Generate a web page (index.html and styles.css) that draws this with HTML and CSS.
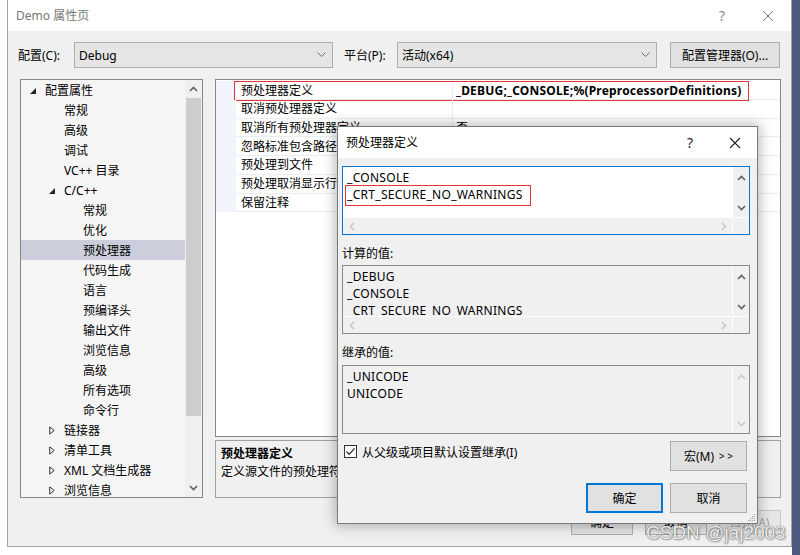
FILE: index.html
```html
<!DOCTYPE html>
<html lang="zh-CN">
<head>
<meta charset="utf-8">
<title>Demo 属性页</title>
<link rel="stylesheet" href="styles.css">
</head>
<body>
<div class="screen">
  <div class="dlg">
    <div class="titlebar">
      <span class="title">Demo 属性页</span>
      <span class="tb-btn help">?</span>
      <span class="tb-btn close"><svg width="12" height="12" viewBox="0 0 12 12"><path d="M1 1L11 11M11 1L1 11" stroke="#7a7a7a" stroke-width="1" fill="none"/></svg></span>
    </div>
    <div class="config-row">
      <span class="lbl lbl-cfg">配置(C):</span>
      <div class="combo combo-cfg"><span class="combo-text">Debug</span><svg class="chev" width="9" height="6" viewBox="0 0 9 6"><path d="M0.5 0.5L4.5 4.5L8.5 0.5" stroke="#6a6a6a" fill="none"/></svg></div>
      <span class="lbl lbl-plat">平台(P):</span>
      <div class="combo combo-plat"><span class="combo-text">活动(x64)</span><svg class="chev" width="9" height="6" viewBox="0 0 9 6"><path d="M0.5 0.5L4.5 4.5L8.5 0.5" stroke="#6a6a6a" fill="none"/></svg></div>
      <div class="btn btn-mgr">配置管理器(O)...</div>
    </div>
    <div class="content">
      <div class="tree">
        <div class="tree-list">
          <div class="item l0"><span class="tw"><svg width="6" height="6" viewBox="0 0 6 6"><path d="M6 0V6H0Z" fill="#262626"/></svg></span><span>配置属性</span></div>
          <div class="item l1"><span class="tw"></span><span>常规</span></div>
          <div class="item l1"><span class="tw"></span><span>高级</span></div>
          <div class="item l1"><span class="tw"></span><span>调试</span></div>
          <div class="item l1"><span class="tw"></span><span>VC++ 目录</span></div>
          <div class="item l1"><span class="tw"><svg width="6" height="6" viewBox="0 0 6 6"><path d="M6 0V6H0Z" fill="#262626"/></svg></span><span>C/C++</span></div>
          <div class="item l2"><span class="tw"></span><span>常规</span></div>
          <div class="item l2"><span class="tw"></span><span>优化</span></div>
          <div class="item l2 sel"><span class="tw"></span><span>预处理器</span></div>
          <div class="item l2"><span class="tw"></span><span>代码生成</span></div>
          <div class="item l2"><span class="tw"></span><span>语言</span></div>
          <div class="item l2"><span class="tw"></span><span>预编译头</span></div>
          <div class="item l2"><span class="tw"></span><span>输出文件</span></div>
          <div class="item l2"><span class="tw"></span><span>浏览信息</span></div>
          <div class="item l2"><span class="tw"></span><span>高级</span></div>
          <div class="item l2"><span class="tw"></span><span>所有选项</span></div>
          <div class="item l2"><span class="tw"></span><span>命令行</span></div>
          <div class="item l1"><span class="tw"><svg width="6" height="9" viewBox="0 0 6 9"><path d="M0.75 0.9V8.1L5.2 4.5Z" fill="none" stroke="#333" stroke-width="1"/></svg></span><span>链接器</span></div>
          <div class="item l1"><span class="tw"><svg width="6" height="9" viewBox="0 0 6 9"><path d="M0.75 0.9V8.1L5.2 4.5Z" fill="none" stroke="#333" stroke-width="1"/></svg></span><span>清单工具</span></div>
          <div class="item l1"><span class="tw"><svg width="6" height="9" viewBox="0 0 6 9"><path d="M0.75 0.9V8.1L5.2 4.5Z" fill="none" stroke="#333" stroke-width="1"/></svg></span><span>XML 文档生成器</span></div>
          <div class="item l1"><span class="tw"><svg width="6" height="9" viewBox="0 0 6 9"><path d="M0.75 0.9V8.1L5.2 4.5Z" fill="none" stroke="#333" stroke-width="1"/></svg></span><span>浏览信息</span></div>
        </div>
        <div class="vscroll tree-scroll">
          <div class="arrow up"><svg width="9" height="6" viewBox="0 0 9 6"><path d="M1 5L4.5 1.5L8 5" stroke="#606060" stroke-width="1.6" fill="none"/></svg></div>
          <div class="thumb"></div>
          <div class="track-fill"></div>
          <div class="arrow down"><svg width="9" height="6" viewBox="0 0 9 6"><path d="M1 1L4.5 4.5L8 1" stroke="#606060" stroke-width="1.6" fill="none"/></svg></div>
        </div>
      </div>
      <div class="right">
        <div class="grid">
          <div class="row first"><span class="gut"></span><span class="name">预处理器定义</span><span class="val bold">_DEBUG;_CONSOLE;%(PreprocessorDefinitions)</span><span class="mark mark-row"></span></div>
          <div class="row"><span class="gut"></span><span class="name">取消预处理器定义</span><span class="val"></span></div>
          <div class="row"><span class="gut"></span><span class="name">取消所有预处理器定义</span><span class="val">否</span></div>
          <div class="row"><span class="gut"></span><span class="name">忽略标准包含路径</span><span class="val">否</span></div>
          <div class="row"><span class="gut"></span><span class="name">预处理到文件</span><span class="val">否</span></div>
          <div class="row"><span class="gut"></span><span class="name">预处理取消显示行号</span><span class="val">否</span></div>
          <div class="row"><span class="gut"></span><span class="name">保留注释</span><span class="val">否</span></div>
        </div>
        <div class="desc">
          <div class="desc-title">预处理器定义</div>
          <div class="desc-text">定义源文件的预处理符号。</div>
        </div>
      </div>
    </div>
    <div class="bottom-btns">
      <div class="btn mbtn">确定</div>
      <div class="btn mbtn">取消</div>
      <div class="btn mbtn disabled">应用(A)</div>
    </div>
  </div>
  <div class="desktop"></div>
</div>

<div class="child">
  <div class="titlebar ctitle">
    <span class="title">预处理器定义</span>
    <span class="tb-btn chelp">?</span>
    <span class="tb-btn cclose"><svg width="12" height="12" viewBox="0 0 12 12"><path d="M1 1L11 11M11 1L1 11" stroke="#222" stroke-width="1.1" fill="none"/></svg></span>
  </div>
  <div class="cbody">
    <div class="lbox edit focus">
      <div class="lcontent">
        <div class="ln">_CONSOLE</div>
        <div class="ln marked">_CRT_SECURE_NO_WARNINGS<span class="mark mark-line"></span></div>
      </div>
      <div class="vscroll">
        <div class="arrow up"><svg width="9" height="6" viewBox="0 0 9 6"><path d="M1 5L4.5 1.5L8 5" stroke="#606060" stroke-width="1.6" fill="none"/></svg></div>
        <div class="arrow down"><svg width="9" height="6" viewBox="0 0 9 6"><path d="M1 1L4.5 4.5L8 1" stroke="#606060" stroke-width="1.6" fill="none"/></svg></div>
      </div>
      <div class="hscroll">
        <div class="harrow"><svg width="6" height="9" viewBox="0 0 6 9"><path d="M5 1L1.5 4.5L5 8" stroke="#c2c2c2" stroke-width="1.4" fill="none"/></svg></div>
        <div class="harrow"><svg width="6" height="9" viewBox="0 0 6 9"><path d="M1 1L4.5 4.5L1 8" stroke="#c2c2c2" stroke-width="1.4" fill="none"/></svg></div>
      </div>
      <div class="corner"></div>
    </div>

    <div class="clabel">计算的值:</div>
    <div class="lbox ro">
      <div class="lcontent">
        <div class="ln">_DEBUG</div>
        <div class="ln">_CONSOLE</div>
        <div class="ln">_CRT_SECURE_NO_WARNINGS</div>
      </div>
      <div class="vscroll">
        <div class="arrow up"><svg width="9" height="6" viewBox="0 0 9 6"><path d="M1 5L4.5 1.5L8 5" stroke="#606060" stroke-width="1.6" fill="none"/></svg></div>
        <div class="arrow down"><svg width="9" height="6" viewBox="0 0 9 6"><path d="M1 1L4.5 4.5L8 1" stroke="#606060" stroke-width="1.6" fill="none"/></svg></div>
      </div>
      <div class="hscroll">
        <div class="harrow"><svg width="6" height="9" viewBox="0 0 6 9"><path d="M5 1L1.5 4.5L5 8" stroke="#c2c2c2" stroke-width="1.4" fill="none"/></svg></div>
        <div class="harrow"><svg width="6" height="9" viewBox="0 0 6 9"><path d="M1 1L4.5 4.5L1 8" stroke="#c2c2c2" stroke-width="1.4" fill="none"/></svg></div>
      </div>
      <div class="corner"></div>
    </div>

    <div class="clabel clabel2">继承的值:</div>
    <div class="lbox ro noh">
      <div class="lcontent">
        <div class="ln">_UNICODE</div>
        <div class="ln">UNICODE</div>
      </div>
      <div class="vscroll">
        <div class="arrow up"><svg width="9" height="6" viewBox="0 0 9 6"><path d="M1 5L4.5 1.5L8 5" stroke="#c8c8c8" stroke-width="1.6" fill="none"/></svg></div>
        <div class="arrow down"><svg width="9" height="6" viewBox="0 0 9 6"><path d="M1 1L4.5 4.5L8 1" stroke="#c8c8c8" stroke-width="1.6" fill="none"/></svg></div>
      </div>
    </div>

    <div class="crow1">
      <span class="chk"><svg width="11" height="11" viewBox="0 0 11 11"><path d="M1.5 5.5L4.2 8.3L9.6 2.4" stroke="#333" stroke-width="1.3" fill="none"/></svg></span>
      <span class="chk-label">从父级或项目默认设置继承(I)</span>
      <div class="btn cbtn macro">宏(M) <span class="gt">&gt; &gt;</span></div>
    </div>
    <div class="crow2">
      <div class="btn cbtn default">确定</div>
      <div class="btn cbtn">取消</div>
    </div>
  </div>
  <svg class="grip" width="9" height="9" viewBox="0 0 9 9"><g fill="#9a9a9a"><rect x="7" y="1" width="1" height="1"/><rect x="5" y="3" width="1" height="1"/><rect x="7" y="3" width="1" height="1"/><rect x="3" y="5" width="1" height="1"/><rect x="5" y="5" width="1" height="1"/><rect x="7" y="5" width="1" height="1"/><rect x="1" y="7" width="1" height="1"/><rect x="3" y="7" width="1" height="1"/><rect x="5" y="7" width="1" height="1"/><rect x="7" y="7" width="1" height="1"/></g></svg>
</div>

<div class="watermark">CSDN @jaj2003</div>
</body>
</html>
```

FILE: styles.css
```css
* { box-sizing: border-box; }
html, body { margin: 0; padding: 0; }
body {
  width: 800px;
  height: 555px;
  overflow: hidden;
  position: relative;
  background: #ffffff;
  font-family: "Noto Sans", "Noto Sans CJK SC", sans-serif;
  font-size: 12px;
  color: #000;
  line-height: 17px;
}

.screen { display: flex; height: 555px; align-items: flex-start; }
.dlg {
  margin-left: 7px;
  width: 785px;
  height: 547px;
  background: #f0f0f0;
  border: 1px solid #a3a3a3;
  border-top: none;
  display: flex;
  flex-direction: column;
}
.desktop { flex: 1; height: 555px; background: #4f5a80; }

/* title bars */
.titlebar {
  height: 31px;
  flex: none;
  background: #fff;
  display: flex;
  align-items: center;
  padding-left: 8px;
  color: #777;
}
.titlebar .title { flex: 1; }
.tb-btn { display: flex; align-items: center; justify-content: center; height: 31px; }
.help { width: 46px; font-size: 14px; color: #8a8a8a; }
.close { width: 46px; }

/* config row */
.config-row {
  display: flex;
  align-items: center;
  height: 26px;
  margin-top: 11px;
  padding-left: 10px;
}
.lbl { flex: none; }
.lbl-cfg { width: 56px; }
.lbl-plat { width: 53px; margin-left: 11px; }
.combo {
  flex: none;
  height: 26px;
  background: #e5e5e5;
  border: 1px solid #adadad;
  display: flex;
  align-items: center;
  padding: 0 6px 0 4px;
}
.combo-text { flex: 1; }
.combo-cfg { width: 259px; }
.combo-plat { width: 260px; }
.btn {
  background: #e1e1e1;
  border: 1px solid #adadad;
  display: flex;
  align-items: center;
  justify-content: center;
}
.btn-mgr { width: 110px; height: 26px; margin-left: 13px; }

/* content */
.content {
  display: flex;
  gap: 12px;
  margin-top: 11px;
  padding-left: 12px;
  height: 419px;
  flex: none;
}
.tree {
  width: 183px;
  height: 419px;
  border: 1px solid #828790;
  background: #f5f5f5;
  display: flex;
}
.tree-list { flex: 1; overflow: hidden; }
.item {
  height: 20px;
  display: flex;
  align-items: center;
  white-space: nowrap;
}
.item.l0 { padding-left: 9px; }
.item.l1 { padding-left: 28px; }
.item.l2 { padding-left: 47px; }
.item.sel { background: #cccedb; }
.tw { width: 15px; flex: none; display: flex; align-items: center; padding-top: 1px; }

.vscroll {
  width: 17px;
  flex: none;
  background: #f0f0f0;
  display: flex;
  flex-direction: column;
  justify-content: space-between;
}
.arrow { height: 19px; display: flex; align-items: center; justify-content: center; flex: none; }
.tree-scroll { justify-content: flex-start; }
.tree-scroll .arrow.up { height: 17px; }
.tree-scroll .thumb { height: 318px; margin: 1px 1px 0 1px; background: #cdcdcd; }
.tree-scroll .track-fill { flex: 1; }
.tree-scroll .arrow.down { height: 18px; }

.right { width: 566px; display: flex; flex-direction: column; }
.grid {
  height: 358px;
  border: 1px solid #828790;
  background: #fff;
  padding-top: 1px;
}
.row {
  height: 18.75px;
  display: flex;
  position: relative;
  white-space: nowrap;
}
.row.first .name, .row.first .val { padding-top: 1px; }
.gut { width: 20px; flex: none; background: #f1f4fa; }
.name {
  width: 216px;
  flex: none;
  padding-left: 5px;
  border-bottom: 1px solid #e9ecf2;
  display: flex;
  align-items: center;
  overflow: hidden;
}
.val {
  flex: 1;
  padding-left: 3px;
  border-left: 1px solid #e9ecf2;
  border-bottom: 1px solid #e9ecf2;
  display: flex;
  align-items: center;
  overflow: hidden;
}
.bold { font-weight: 700; letter-spacing: 0.2px; }
.mark { position: absolute; border: 1.5px solid #e8333a; pointer-events: none; }
.mark-row { left: 18px; top: 0; width: 515px; height: 20px; }

.desc {
  margin-top: 3px;
  height: 58px;
  border: 1px solid #a0a0a0;
  background: #f0f0f0;
  padding: 4px 0 0 5px;
  line-height: 18px;
}
.desc-title { font-weight: 700; }

.bottom-btns {
  display: flex;
  justify-content: flex-end;
  gap: 12px;
  margin-top: 12px;
  padding-right: 10px;
}
.mbtn { width: 62px; height: 25px; }
.mbtn.disabled { color: #a0a0a0; border-color: #c8c8c8; background: #e6e6e6; }

/* child dialog */
.child {
  position: absolute;
  left: 337px;
  top: 126px;
  width: 421px;
  height: 398px;
  background: #f0f0f0;
  border: 1px solid #7a7a7a;
  box-shadow: 0 0 12px 2px rgba(0, 0, 0, 0.28);
}
.ctitle { color: #000; padding-left: 8px; }
.chelp { width: 46px; font-size: 14px; color: #222; }
.cclose { width: 44px; }
.cbody { padding: 8px 7px 0 4px; }

.lbox {
  height: 69px;
  border: 1px solid #8a8a8a;
  display: grid;
  grid-template-columns: 1fr 17px;
  grid-template-rows: 1fr 17px;
}
.lbox.focus { border-color: #0078d7; background: #fff; }
.lbox.ro { background: #f0f0f0; }
.lbox.noh { grid-template-rows: 1fr; }
.lcontent { overflow: hidden; padding: 2px 0 0 4px; white-space: nowrap; }
.ln { height: 17px; letter-spacing: 0.3px; }
.marked { position: relative; display: inline-block; }
.mark-line { left: -2px; top: -1px; width: 186px; height: 21px; }
.lbox .vscroll { border-left: 1px solid #fff; }
.lbox .arrow.up { height: 21px; padding-top: 1px; }
.lbox .arrow.down { height: 19px; }
.hscroll {
  background: #f0f0f0;
  border-top: 1px solid #fff;
  display: flex;
  justify-content: space-between;
}
.harrow { width: 17px; display: flex; align-items: center; justify-content: center; }
.corner { background: #f0f0f0; border-top: 1px solid #fff; border-left: 1px solid #fff; }

.clabel { margin-top: 10px; height: 17px; margin-bottom: 3px; }
.clabel2 { margin-bottom: 4px; }

.crow1 {
  margin-top: 7px;
  display: flex;
  align-items: flex-start;
  height: 30px;
  padding-right: 3px;
}
.chk {
  width: 13px;
  height: 13px;
  margin: 4px 0 0 2px;
  border: 1px solid #333;
  background: #fff;
  display: flex;
  align-items: center;
  justify-content: center;
  flex: none;
}
.chk-label { margin: 3px 0 0 5px; flex: 1; }
.cbtn { width: 77px; height: 30px; flex: none; }
.gt { font-size: 10px; margin-left: 5px; letter-spacing: 0; }
.crow2 {
  margin-top: 12px;
  display: flex;
  justify-content: flex-end;
  gap: 7px;
  padding-right: 3px;
}
.cbtn.default { border: 2px solid #0078d7; }
.grip { position: absolute; right: 1px; bottom: 1px; }

.watermark {
  position: absolute;
  left: 646px;
  top: 522px;
  font-family: "Liberation Sans", Arial, sans-serif;
  font-size: 19px;
  line-height: 22px;
  color: rgba(255, 255, 255, 0.9);
  text-shadow: 0 0 1px #6a6a6a, 0 0 1px #6a6a6a, 1px 1px 2px rgba(0, 0, 0, 0.35);
  white-space: nowrap;
}
```
